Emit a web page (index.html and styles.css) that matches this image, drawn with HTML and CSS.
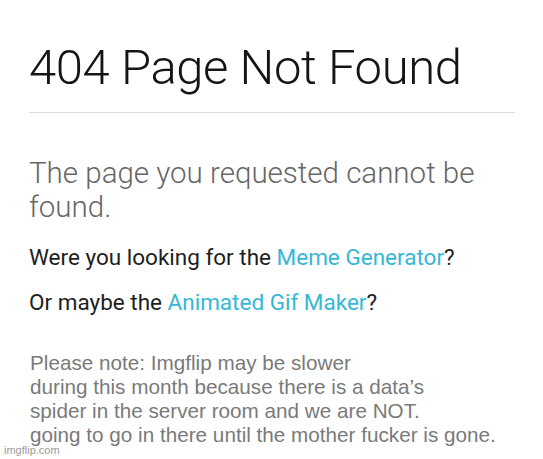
FILE: index.html
```html
<!DOCTYPE html>
<html lang="en">
<head>
    <meta charset="UTF-8">
    <meta name="viewport" content="width=device-width, initial-scale=1.0">
    <title>404 Page Not Found</title>
    <link rel="stylesheet" href="styles.css">
</head>
<body>
    <div class="page">
        <h1 class="title">404 Page Not Found</h1>
        <hr class="divider">

        <p class="subtitle">The page you requested cannot be found.</p>

        <p class="suggest">Were you looking for the <a href="#">Meme Generator</a>?</p>
        <p class="suggest">Or maybe the <a href="#">Animated Gif Maker</a>?</p>

        <p class="note">
            Please note: Imgflip may be slower<br>
            during this month because there is a data’s<br>
            spider in the server room and we are NOT.<br>
            going to go in there until the mother fucker is gone.
        </p>
    </div>

    <div class="watermark">imgflip.com</div>
</body>
</html>
```

FILE: styles.css
```css
* {
    margin: 0;
    padding: 0;
    box-sizing: border-box;
}

body {
    background-color: #fff;
    font-family: Roboto, "Liberation Sans", sans-serif;
    width: 543px;
    height: 459px;
    overflow: hidden;
    position: relative;
}

.page {
    padding: 39px 28px 0 29px;
}

.title {
    font-size: 49px;
    font-weight: 300;
    line-height: 58px;
    letter-spacing: -0.4px;
    color: #151515;
}

.divider {
    border: none;
    border-top: 1px solid #dcdcdc;
    margin-top: 15px;
}

.subtitle {
    margin-top: 43px;
    font-size: 29.5px;
    font-weight: 300;
    line-height: 34px;
    color: #666;
}

.suggest {
    margin-top: 20px;
    font-size: 22.5px;
    line-height: 26px;
    color: #1e1e1e;
}

.suggest + .suggest {
    margin-top: 19px;
}

.suggest a {
    color: #35b7d8;
    text-decoration: none;
}

.note {
    margin-top: 36px;
    padding-left: 1px;
    font-family: "Liberation Sans", Arial, sans-serif;
    font-size: 20.7px;
    line-height: 24px;
    color: #7a7a7a;
}

.watermark {
    position: absolute;
    left: 4px;
    bottom: 3px;
    font-family: "Liberation Sans", Arial, sans-serif;
    font-size: 11px;
    color: #9a9a9a;
}
```
